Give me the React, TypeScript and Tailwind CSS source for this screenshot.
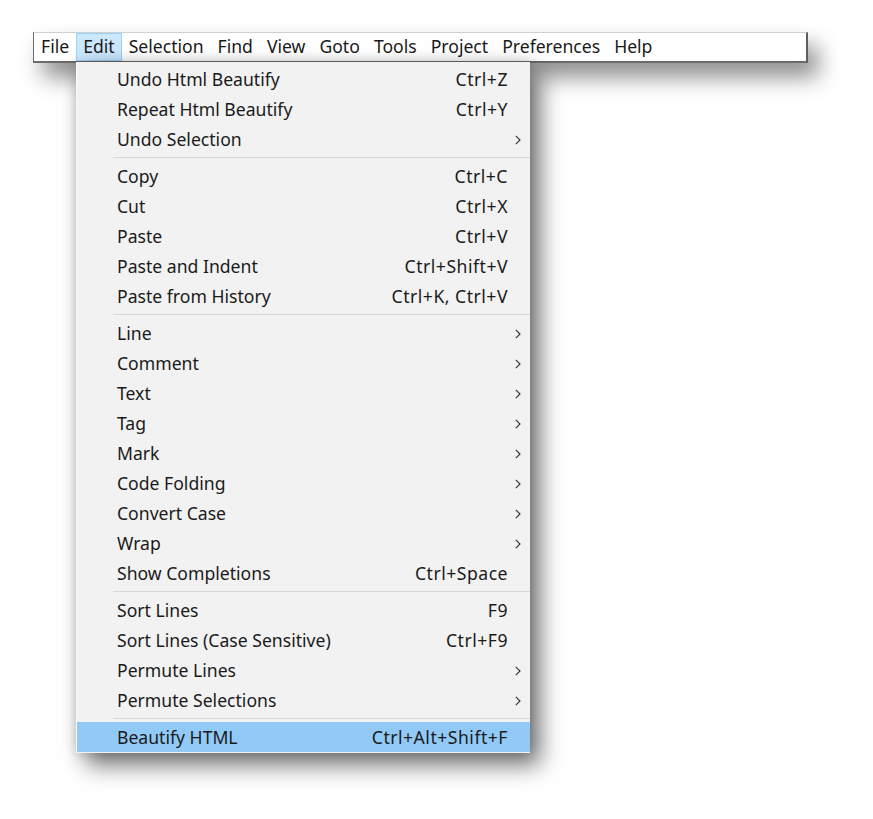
import React from "react";

type Item =
  | { type: "item"; label: string; shortcut?: string; sub?: boolean; active?: boolean }
  | { type: "sep" };

const items: Item[] = [
  { type: "item", label: "Undo Html Beautify", shortcut: "Ctrl+Z" },
  { type: "item", label: "Repeat Html Beautify", shortcut: "Ctrl+Y" },
  { type: "item", label: "Undo Selection", sub: true },
  { type: "sep" },
  { type: "item", label: "Copy", shortcut: "Ctrl+C" },
  { type: "item", label: "Cut", shortcut: "Ctrl+X" },
  { type: "item", label: "Paste", shortcut: "Ctrl+V" },
  { type: "item", label: "Paste and Indent", shortcut: "Ctrl+Shift+V" },
  { type: "item", label: "Paste from History", shortcut: "Ctrl+K, Ctrl+V" },
  { type: "sep" },
  { type: "item", label: "Line", sub: true },
  { type: "item", label: "Comment", sub: true },
  { type: "item", label: "Text", sub: true },
  { type: "item", label: "Tag", sub: true },
  { type: "item", label: "Mark", sub: true },
  { type: "item", label: "Code Folding", sub: true },
  { type: "item", label: "Convert Case", sub: true },
  { type: "item", label: "Wrap", sub: true },
  { type: "item", label: "Show Completions", shortcut: "Ctrl+Space" },
  { type: "sep" },
  { type: "item", label: "Sort Lines", shortcut: "F9" },
  { type: "item", label: "Sort Lines (Case Sensitive)", shortcut: "Ctrl+F9" },
  { type: "item", label: "Permute Lines", sub: true },
  { type: "item", label: "Permute Selections", sub: true },
  { type: "sep" },
  { type: "item", label: "Beautify HTML", shortcut: "Ctrl+Alt+Shift+F", active: true },
];

const menus = ["File", "Edit", "Selection", "Find", "View", "Goto", "Tools", "Project", "Preferences", "Help"];

function Chevron() {
  return (
    <svg width="6" height="10" viewBox="0 0 6 10" className="mr-[9px]">
      <path d="M0.8 0.8 L5 5 L0.8 9.2" fill="none" stroke="#333" strokeWidth="1.15" />
    </svg>
  );
}

export default function App() {
  return (
    <div
      className="relative w-[873px] h-[819px] bg-white text-[#1a1a1a] text-[17.6px] leading-none"
      style={{ fontFamily: '"Noto Sans", "Open Sans", sans-serif' }}
    >
      <div className="pt-[32px] pl-[33px]">
        <div className="flex w-[775px] h-[31px] bg-white border-t border-t-[#cfcfcf] border-l border-l-[#6a6a6a] border-r-2 border-r-[#5e5e5e] border-b-2 border-b-[#6a6a6a] shadow-[10px_14px_22px_rgba(0,0,0,0.45)]">
          {menus.map((m) =>
            m === "Edit" ? (
              <div
                key={m}
                className="flex items-center px-[6px] h-[28px] bg-[#cce8ff] border border-[#99d1ff]"
              >
                {m}
              </div>
            ) : (
              <div key={m} className="flex items-center px-[7px] h-[28px]">
                {m}
              </div>
            )
          )}
        </div>
      </div>

      <div className="absolute left-[76px] top-[62px] w-[454px] bg-[#f2f2f2] border-l border-l-[#fafafa] pt-[2px] pb-[1px] shadow-[10px_12px_22px_rgba(0,0,0,0.55),0_0_12px_rgba(0,0,0,0.18)]">
        {items.map((it, i) =>
          it.type === "sep" ? (
            <div key={i} className="h-[7px] flex items-center pl-[36px]">
              <div className="h-px w-full bg-[#d7d7d7]" />
            </div>
          ) : (
            <div
              key={i}
              className={
                "flex items-center h-[30px] pt-[2px] pl-[40px] " + (it.active ? "bg-[#91c9f7]" : "")
              }
            >
              <span className="flex-1">{it.label}</span>
              {it.shortcut ? (
                <span className="mr-[22px] tracking-[0.5px]">{it.shortcut}</span>
              ) : null}
              {it.sub ? <Chevron /> : null}
            </div>
          )
        )}
      </div>
    </div>
  );
}
